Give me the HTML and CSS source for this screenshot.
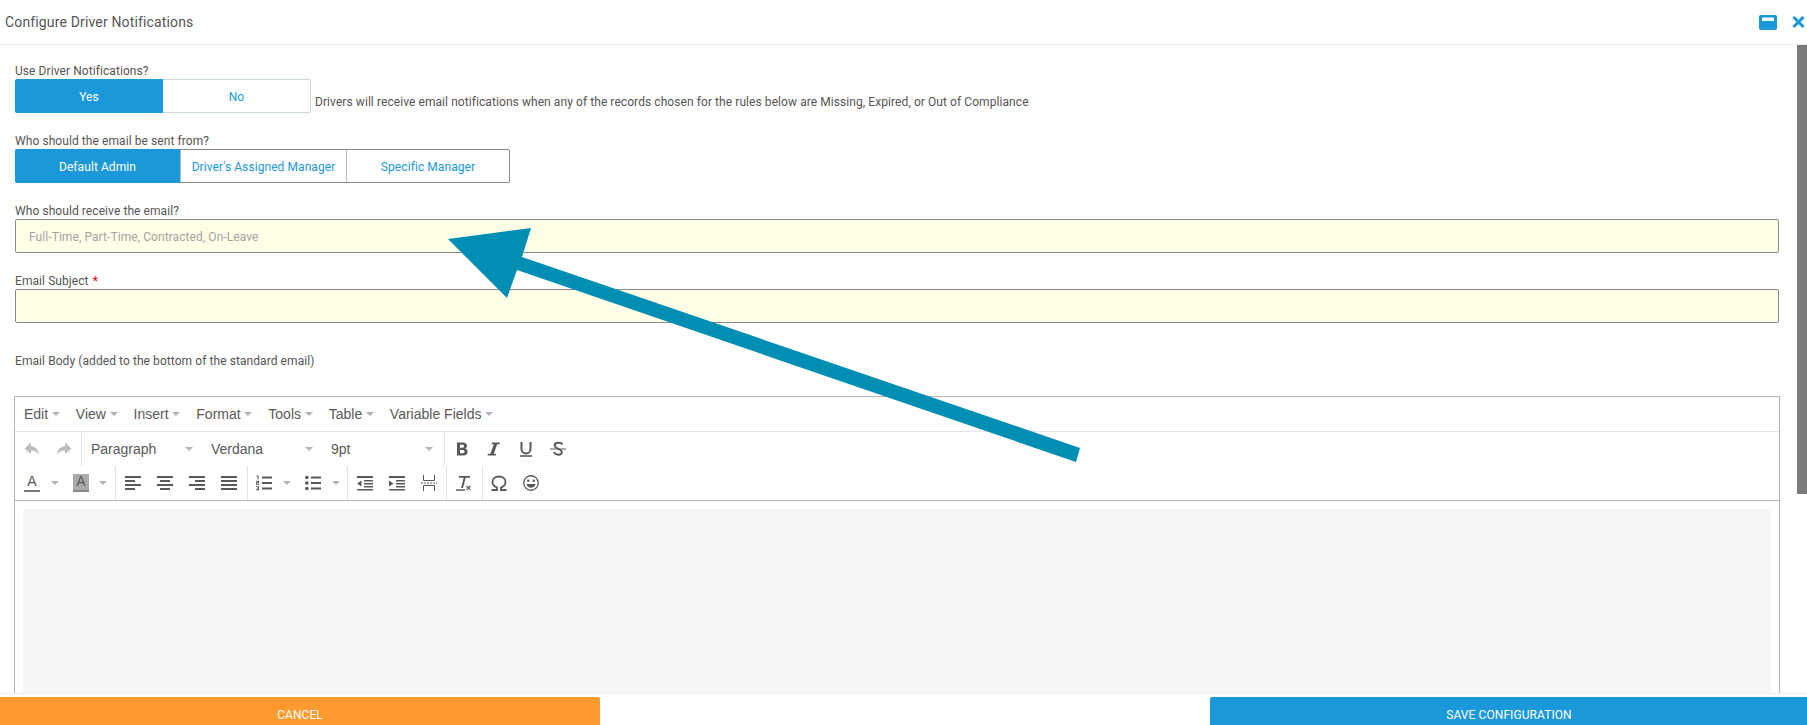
FILE: index.html
```html
<!DOCTYPE html>
<html lang="en">
<head>
<meta charset="utf-8">
<title>Configure Driver Notifications</title>
<link rel="stylesheet" href="styles.css">
</head>
<body>
<div class="dialog">
  <header class="head">
    <h1 class="title">Configure Driver Notifications</h1>
    <div class="head-icons">
      <svg class="ic-max" width="18" height="15" viewBox="0 0 18 15"><rect width="18" height="15" rx="2" fill="#1b98d9"/><rect x="3" y="2.500" width="12" height="3.500" fill="#fff"/></svg>
      <svg class="ic-close" width="13" height="12" viewBox="0 0 13 12"><path d="M1.500 1l10 10M11.500 1l-10 10" stroke="#1b98d9" stroke-width="3"/></svg>
    </div>
  </header>
  <main class="main">
    <div class="field">
      <div class="label">Use Driver Notifications?</div>
      <div class="seg-row">
        <div class="seg seg-light">
          <span class="seg-btn on w148">Yes</span><span class="seg-btn w147">No</span>
        </div>
        <span class="note">Drivers will receive email notifications when any of the records chosen for the rules below are Missing, Expired, or Out of Compliance</span>
      </div>
    </div>
    <div class="field">
      <div class="label">Who should the email be sent from?</div>
      <div class="seg seg-dark">
        <span class="seg-btn on w165">Default Admin</span><span class="seg-btn w166 sep">Driver's Assigned Manager</span><span class="seg-btn w163 sep">Specific Manager</span>
      </div>
    </div>
    <div class="field">
      <div class="label">Who should receive the email?</div>
      <div class="input placeholder">Full-Time, Part-Time, Contracted, On-Leave</div>
    </div>
    <div class="field">
      <div class="label">Email Subject <span class="req">*</span></div>
      <div class="input"></div>
    </div>
    <div class="label body-label">Email Body (added to the bottom of the standard email)</div>
    <div class="editor">
      <div class="menubar">
        <span class="menu">Edit<i class="caret"></i></span>
        <span class="menu">View<i class="caret"></i></span>
        <span class="menu">Insert<i class="caret"></i></span>
        <span class="menu">Format<i class="caret"></i></span>
        <span class="menu">Tools<i class="caret"></i></span>
        <span class="menu">Table<i class="caret"></i></span>
        <span class="menu">Variable Fields<i class="caret"></i></span>
      </div>
      <div class="toolbar">
        <div class="tgroup first">
          <span class="tb"><svg width="16" height="16" viewBox="0 0 16 16" fill="#bbb"><path d="M7 1.500L.5 7.500 7 13V9.600c3.500 0 6 1 8 4C14.500 8.500 11.500 5.600 7 5.200z"/></svg></span>
          <span class="tb"><svg width="16" height="16" viewBox="0 0 16 16" fill="#bbb"><path d="M9 1.500l6.500 6L9 13V9.600c-3.500 0-6 1-8 4C1.500 8.500 4.500 5.600 9 5.200z"/></svg></span>
        </div>
        <div class="tgroup">
          <span class="listbox">Paragraph<i class="caret"></i></span>
          <span class="listbox">Verdana<i class="caret"></i></span>
          <span class="listbox">9pt<i class="caret"></i></span>
        </div>
        <div class="tgroup">
          <span class="tb"><svg width="16" height="16" viewBox="0 0 16 16" fill="#595959"><path fill-rule="evenodd" d="M3 1.500h6c2.500 0 4 1.300 4 3.300 0 1.400-.8 2.400-2 2.800 1.600.3 2.600 1.500 2.600 3.200 0 2.300-1.700 3.700-4.400 3.700H3zm3 2.300v2.900h2.400c1 0 1.600-.6 1.600-1.500s-.6-1.400-1.600-1.400zm0 5.200v3.300h2.700c1.200 0 1.900-.6 1.900-1.700S9.900 9 8.700 9z"/></svg></span>
          <span class="tb"><svg width="16" height="16" viewBox="0 0 16 16" fill="#595959"><path d="M6 1.500h8l-.4 1.700h-2.400L7.800 12.800h2.300l-.5 1.700H1.500l.4-1.700h2.500L7.800 3.200H5.600z"/></svg></span>
          <span class="tb"><svg width="16" height="16" viewBox="0 0 16 16" fill="none" stroke="#595959" stroke-width="2"><path d="M3.500 1v7c0 6 9 6 9 0V1"/><path d="M2 15h12" stroke-width="1.600"/></svg></span>
          <span class="tb"><svg width="16" height="16" viewBox="0 0 16 16" fill="none" stroke="#595959"><path d="M12.500 3.500C11 1 5 1 4.600 4c-.5 4 7.700 3.500 7.300 7.500-.3 3-6.500 3-8-.3" stroke-width="1.900"/><path d="M0 8h16" stroke-width="1"/></svg></span>
        </div>
      </div>
      <div class="toolbar row2">
        <div class="tgroup first">
          <span class="split split-a1"><span class="glyph-a">A</span><i class="caret"></i></span>
          <span class="split split-a2"><span class="glyph-a filled">A</span><i class="caret"></i></span>
        </div>
        <div class="tgroup pr2">
          <span class="tb"><svg width="16" height="16" viewBox="0 0 16 16" fill="#595959"><path d="M0 1h16v2H0zM0 5h10v2H0zM0 9h16v2H0zM0 13h10v2H0z"/></svg></span>
          <span class="tb"><svg width="16" height="16" viewBox="0 0 16 16" fill="#595959"><path d="M0 1h16v2H0zM3 5h10v2H3zM0 9h16v2H0zM3 13h10v2H3z"/></svg></span>
          <span class="tb"><svg width="16" height="16" viewBox="0 0 16 16" fill="#595959"><path d="M0 1h16v2H0zM6 5h10v2H6zM0 9h16v2H0zM6 13h10v2H6z"/></svg></span>
          <span class="tb"><svg width="16" height="16" viewBox="0 0 16 16" fill="#595959"><path d="M0 1h16v2H0zM0 5h16v2H0zM0 9h16v2H0zM0 13h16v2H0z"/></svg></span>
        </div>
        <div class="tgroup">
          <span class="split split-list1"><svg width="16" height="16" viewBox="0 0 16 16" fill="#595959"><path d="M6 1.500h10v2H6zM6 7h10v2H6zM6 12.500h10v2H6z"/><path d="M.5 .5h2v4h-1v-3h-1zM0 5.800h3v2.200H1v.8h2v.9H0V7.300h2v-.6H0zM0 11.200h3v4H0v-.9h2v-.7H.8v-.8H2v-.7H0z"/></svg><i class="caret"></i></span>
          <span class="split split-list2"><svg width="16" height="16" viewBox="0 0 16 16" fill="#595959"><circle cx="1.800" cy="2.500" r="1.800"/><circle cx="1.800" cy="8" r="1.800"/><circle cx="1.800" cy="13.500" r="1.800"/><path d="M6 1.500h10v2H6zM6 7h10v2H6zM6 12.500h10v2H6z"/></svg><i class="caret"></i></span>
        </div>
        <div class="tgroup">
          <span class="tb"><svg width="16" height="16" viewBox="0 0 16 16" fill="#595959"><path d="M0 1h16v2H0zM7 5h9v1.500H7zM7 8h9v1.500H7zM7 11h9v1.500H7zM0 14h16v1.500H0zM4.500 5.500v6L0 8.500z"/></svg></span>
          <span class="tb"><svg width="16" height="16" viewBox="0 0 16 16" fill="#595959"><path d="M0 1h16v2H0zM7 5h9v1.500H7zM7 8h9v1.500H7zM7 11h9v1.500H7zM0 14h16v1.500H0zM0 5.500v6l4.500-3z"/></svg></span>
          <span class="tb"><svg width="16" height="16" viewBox="0 0 16 16" fill="none" stroke="#595959"><path d="M2.500 0v5.500h11V0M2.500 16v-5.500h11V16"/><path d="M0 8h16" stroke-dasharray="2 1"/></svg></span>
        </div>
        <div class="tgroup pr2">
          <span class="tb"><svg width="16" height="16" viewBox="0 0 16 16" fill="#595959"><path d="M3 1h11v1.800h-4.300L7 13H5L7.700 2.800H3z"/><path d="M0 14.300h9v1.500H0z"/><path d="M11 10.500l1.500 1.500 1.500-1.500.9.9-1.500 1.500 1.500 1.500-.9.900-1.500-1.500-1.500 1.500-.9-.900 1.500-1.500-1.500-1.500z"/></svg></span>
        </div>
        <div class="tgroup pl0">
          <span class="tb"><svg width="16" height="16" viewBox="0 0 16 16" fill="none" stroke="#595959" stroke-width="1.800"><path d="M.5 15H6v-2.500C3.500 11.500 1.500 9.500 1.500 7 1.500 3.500 4.300 1.500 8 1.500s6.500 2 6.500 5.500c0 2.500-2 4.500-4.500 5.500V15h5.500"/></svg></span>
          <span class="tb"><svg width="16" height="16" viewBox="0 0 16 16" fill="none" stroke="#595959"><circle cx="8" cy="8" r="7.250" stroke-width="1.300"/><circle cx="5.300" cy="5.800" r="1.200" fill="#595959" stroke="none"/><circle cx="10.700" cy="5.800" r="1.200" fill="#595959" stroke="none"/><path d="M3.500 9c.8 5 8.200 5 9 0z" fill="#595959" stroke="none"/></svg></span>
        </div>
      </div>
      <div class="edit-area"><div class="edit-page"></div></div>
    </div>
  </main>
  <footer class="foot">
    <span class="fbtn cancel">CANCEL</span>
    <span class="fbtn save">SAVE CONFIGURATION</span>
  </footer>
  <div class="scrollthumb"></div>
  <svg class="arrow" width="1807" height="725" viewBox="0 0 1807 725"><polygon points="448,239 531,228 522,257 1080,448 1076,462 517,270 507,298" fill="#008fb3"/></svg>
</div>
</body>
</html>
```

FILE: styles.css
```css
* { box-sizing: border-box; }
html, body { margin: 0; height: 100%; overflow: hidden; background: #fff; }
body { font-family: Roboto, "Liberation Sans", sans-serif; font-size: 12px; letter-spacing: .075px; color: #555; }
.dialog { position: relative; height: 725px; display: flex; flex-direction: column; overflow: hidden; }

.head { height: 45px; flex: none; border-bottom: 1px solid #e8e8e8; display: flex; align-items: center; justify-content: space-between; padding: 0 2px 0 5px; }
.title { margin: 0; font-size: 14px; font-weight: 400; letter-spacing: .15px; color: #555; }
.head-icons { display: flex; align-items: center; gap: 15px; }
.ic-max, .ic-close { display: block; }

.main { flex: 1; min-height: 0; overflow: hidden; padding: 17px 28px 0 15px; }
.field { margin-bottom: 19px; }
.label { height: 17px; line-height: 19px; font-size: 12px; color: #555; }
.req { color: #e00; margin-left: 1px; }
.body-label { margin: 29px 0 27px; }

.seg-row { display: flex; align-items: flex-end; }
.seg { display: inline-flex; height: 34px; border-radius: 2px; border: 1px solid; width: max-content; }
.seg-light { border-color: #c9d9da; }
.seg-dark { border-color: #8a8a8a; }
.seg-btn { display: flex; align-items: center; justify-content: center; color: #1b98d9; height: 100%; padding-top: 1px; }
.seg-btn.on { background: #1b98d9; color: #fff; margin: -1px 0 -1px -1px; height: 34px; border-radius: 2px 0 0 2px; }
.seg-btn.sep { border-left: 1px solid #bbb; }
.w148 { width: 148px; }
.w147 { width: 147px; }
.w165 { width: 165px; }
.w166 { width: 166px; }
.w163 { width: 163px; }
.note { margin-left: 4px; padding-bottom: 3px; line-height: 15px; color: #555; }

.input { height: 34px; background: #ffffe8; border: 1px solid #888; border-radius: 2px; line-height: 34px; padding-left: 13px; }
.placeholder { color: #a3a3a3; }

.editor { margin: 0 -1px; height: 400px; border: 1px solid #b5b5b5; border-bottom: 0; font-family: "Liberation Sans", Arial, sans-serif; font-size: 14px; letter-spacing: 0; color: #595959; }
.menubar { height: 35px; display: flex; align-items: center; padding-left: 1px; border-bottom: 1px solid #e2e4e7; }
.menu { display: flex; align-items: center; padding: 0 8px; }
.menu .caret { margin-left: 3.7px; }
.caret { display: inline-block; width: 0; height: 0; border: 4px solid transparent; border-top-color: #b0b3b8; border-bottom: 0; flex: none; }
.toolbar { height: 34px; display: flex; }
.row2 { height: 35px; border-bottom: 1px solid #b5b5b5; }
.tgroup { display: flex; align-items: center; border-left: 1px solid #e2e4e7; padding: 0 1px; height: 100%; }
.tgroup.first { border-left: 0; }
.row2 .tgroup.first { padding: 0 0 0 6px; }
.tgroup.pr2 { padding-right: 2px; }
.tgroup.pl0 { padding-left: 0; }
.tb { width: 32px; height: 100%; display: flex; align-items: center; justify-content: center; flex: none; }
.listbox { width: 120px; padding: 0 10px 0 8px; display: flex; align-items: center; justify-content: space-between; }
.split { display: flex; align-items: center; padding-left: 7px; gap: 11px; flex: none; height: 100%; }
.split-a1 { width: 44px; padding-left: 3px; }
.split-a2 { width: 50px; padding-left: 8px; gap: 10px; }
.split-list1 { width: 49px; }
.split-list2 { width: 48px; }
.glyph-a { width: 16px; height: 18px; line-height: 15px; text-align: center; font-size: 14px; border-bottom: 2px solid #777; color: #595959; }
.glyph-a.filled { background: #aaa; border-bottom-color: #888; }

.edit-area { height: 200px; padding: 8px 8px 0; }
.edit-page { height: 100%; background: #f6f6f6; }

.foot { flex: none; height: 32px; border-top: 1px solid #eee; padding-top: 3px; display: flex; justify-content: space-between; position: relative; background: #fff; z-index: 1; }
.fbtn { display: flex; align-items: center; justify-content: center; color: #fff; height: 28px; padding-top: 7px; }
.cancel { width: 600px; background: #ff9a2e; border-radius: 0 2px 0 0; }
.save { width: 597px; background: #1b98d9; border-radius: 2px 0 0 0; padding-left: 1px; }

.scrollthumb { position: absolute; left: 1797px; top: 45px; width: 10px; height: 449px; background: #7a7a7a; }
.arrow { position: absolute; left: 0; top: 0; pointer-events: none; z-index: 2; }
```
